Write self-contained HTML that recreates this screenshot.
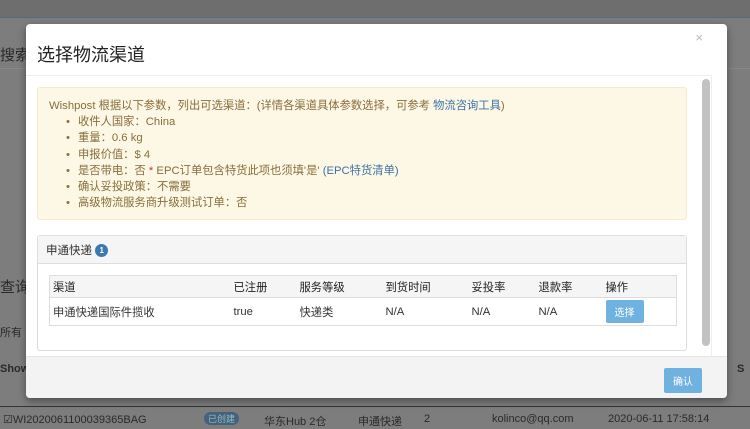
<!DOCTYPE html>
<html><head><meta charset="utf-8"><style>
*{box-sizing:border-box;margin:0;padding:0}
body{width:750px;height:426px;overflow:hidden;position:relative;background:#7d7d7d;font-family:"Liberation Sans","Noto Sans CJK SC",sans-serif;font-size:11px;color:#333}
.abs{position:absolute}
.bg{color:#2a2a2a}
.modal{position:absolute;left:26px;top:24px;width:701px;height:374px;background:#fff;border-radius:4px;box-shadow:0 3px 8px rgba(0,0,0,.4);overflow:hidden}
.title{position:absolute;left:11px;top:17px;font-size:18px;color:#222}
.close{position:absolute;right:24px;top:6px;font-size:13px;color:#bbb}
.body{position:absolute;left:0;top:51px;width:686px;height:281px;border-top:1px solid #eee;border-right:1px solid #eee}
.sb{position:absolute;left:676px;top:55px;width:8px;height:267px;background:#c2c2c2;border-radius:4px}
.foot{position:absolute;left:0;top:332px;width:701px;height:42px;background:#f3f3f3;border-top:1px solid #e5e5e5}
.alert{position:absolute;left:11px;top:63px;width:650px;height:133px;background:#fcf8e5;border:1px solid #f3ecd0;border-radius:3px;color:#8a6d3b;padding:10px 0 0 11px;line-height:16.2px;font-size:11.3px}
.alert ul{margin-left:17px;list-style:none}
.alert li:before{content:"•";margin-right:8px}
a{color:#3f71a6}
.panel{position:absolute;left:11px;top:211px;width:650px;height:116px;border:1px solid #ddd;border-radius:3px}
.ph{height:28px;background:#f5f5f5;border-bottom:1px solid #ddd;padding:6px 0 0 8px;font-size:11.5px;color:#333}
.badge{display:inline-block;width:13px;height:13px;border-radius:7px;background:#3a7ab0;color:#fff;font-size:8px;text-align:center;line-height:13px;font-weight:bold;vertical-align:1px}
table{position:absolute;left:11px;top:39px;width:628px;border-collapse:collapse;border:1px solid #ddd}
td{height:22px;padding:0 0 0 3px;font-size:11.3px}
tr.h td{background:#f5f5f5;border-bottom:1px solid #ddd;height:22px;color:#222}
tr.r td{height:28px}
.btn{display:inline-block;background:#6fb2e0;color:#fff;font-size:10px;padding:4px 9px;border-radius:2px}
</style></head><body>
<div class="abs" style="left:0;top:0;width:750px;height:18px;background:#6e6e6e;border-bottom:1px solid #5b6a78"></div>
<div class="abs" style="left:0;top:68px;width:750px;height:1px;background:#888"></div>
<div class="abs bg" style="left:0;top:44px;font-size:15px">搜索</div>
<div class="abs bg" style="left:0;top:276px;font-size:15px">查询</div>
<div class="abs bg" style="left:0;top:324px;font-size:11px">所有</div>
<div class="abs bg" style="left:0;top:363px;font-size:11px;font-weight:bold">Show</div>
<div class="abs bg" style="left:737px;top:363px;font-size:11px;font-weight:bold">S</div>
<div class="abs" style="left:0;top:406px;width:750px;height:1px;background:#333"></div>
<div class="abs bg" style="left:3px;top:413px;font-size:11px">☑WI2020061100039365BAG</div>
<div class="abs" style="left:204px;top:412px;width:35px;height:13px;border-radius:7px;background:#44617d;color:#9bb;font-size:9px;text-align:center">已创建</div>
<div class="abs bg" style="left:264px;top:413px">华东Hub 2仓</div>
<div class="abs bg" style="left:358px;top:413px">申通快递</div>
<div class="abs bg" style="left:424px;top:413px">2</div>
<div class="abs bg" style="left:492px;top:413px">kolinco@qq.com</div>
<div class="abs bg" style="left:608px;top:413px">2020-06-11 17:58:14</div>
<div class="modal">
<div class="title">选择物流渠道</div>
<div class="close">×</div>
<div class="body"></div>
<div class="sb"></div>
<div class="alert">Wishpost 根据以下参数，列出可选渠道：(详情各渠道具体参数选择，可参考 <a>物流咨询工具</a>)
<ul><li>收件人国家：China</li><li>重量：0.6 kg</li><li>申报价值：$ 4</li><li>是否带电：否 <span style="color:#c33">*</span> EPC订单包含特货此项也须填'是' <a>(EPC特货清单)</a></li><li>确认妥投政策：不需要</li><li>高级物流服务商升级测试订单：否</li></ul></div>
<div class="panel"><div class="ph">申通快递 <span class="badge">1</span></div>
<table>
<tr class="h"><td style="width:181px">渠道</td><td style="width:66px">已注册</td><td style="width:86px">服务等级</td><td style="width:86px">到货时间</td><td style="width:67px">妥投率</td><td style="width:67px">退款率</td><td>操作</td></tr>
<tr class="r"><td>申通快递国际件揽收</td><td>true</td><td>快递类</td><td>N/A</td><td>N/A</td><td>N/A</td><td><span class="btn">选择</span></td></tr>
</table></div>
<div class="foot"><span class="btn" style="position:absolute;left:638px;top:11px;padding:5px 9px">确认</span></div>
</div>
</body></html>
